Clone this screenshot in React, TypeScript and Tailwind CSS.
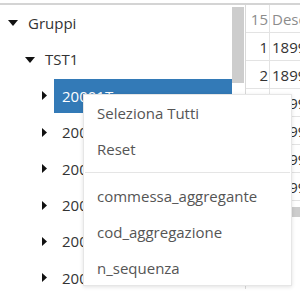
import React from "react"

const font = { fontFamily: '"Open Sans", "Noto Sans", sans-serif' }

const children = ["20001T", "20002T", "20003T", "20004T", "20005T", "20006T"]

function DownTri({ className }: { className: string }) {
  return (
    <svg width="10" height="6" viewBox="0 0 10 6" className={className}>
      <path d="M0 0 L10 0 L5 6 Z" fill="#111" />
    </svg>
  )
}

function RightTri() {
  return (
    <svg width="5" height="9" viewBox="0 0 5 9" className="ml-[42px] shrink-0">
      <path d="M0 0 L5 4.5 L0 9 Z" fill="#111" />
    </svg>
  )
}

export default function App() {
  return (
    <div className="relative w-[300px] h-[291px] overflow-hidden bg-white text-[14px]" style={font}>
      <div className="mt-[3px] border-t-2 border-[#d4d4d4] flex h-[286px]">
        {/* tree panel */}
        <div className="w-[232px] shrink-0 overflow-hidden">
          <div className="h-[36.4px] flex items-center text-[#333]">
            <DownTri className="ml-[8px] shrink-0" />
            <span className="ml-[10px] text-[15px]">Gruppi</span>
          </div>
          <div className="h-[36.4px] flex items-center text-[#333]">
            <DownTri className="ml-[25px] shrink-0" />
            <span className="ml-[10px] text-[15px]">TST1</span>
          </div>
          {children.map((c, i) => (
            <div key={c} className="h-[36.4px] flex items-center">
              <RightTri />
              <div
                className={`ml-[7px] flex-1 h-[34px] flex items-center pl-[8px] text-[15px] ${
                  i === 0 ? "bg-[#337ab7] text-white" : "text-[#333]"
                }`}
              >
                {c}
              </div>
            </div>
          ))}
        </div>
        {/* vertical scrollbar */}
        <div className="w-[12px] shrink-0 pt-[2px]">
          <div className="h-[76px] bg-[#cdcdcd]" />
        </div>
        <div className="w-[1px]" />
        {/* grid */}
        <div className="flex-1 border-l border-[#d9d9d9] overflow-hidden">
          <div className="flex h-[28px] border-b border-[#e3e3e3] text-[#8c8c8c] text-[15px]">
            <div className="w-[24px] shrink-0 border-r border-[#e3e3e3] text-right pr-[1px] leading-[28px]">15</div>
            <div className="pl-[2px] leading-[28px] whitespace-nowrap">Descrizione</div>
          </div>
          {[1, 2, 3, 4, 5, 6].map((n) => (
            <div key={n} className="flex h-[28px] border-b border-[#e3e3e3] text-[#333] text-[15px]">
              <div className="w-[24px] shrink-0 border-r border-[#e3e3e3] text-right pr-[1px] leading-[28px]">{n}</div>
              <div className="pl-[2px] leading-[28px] whitespace-nowrap">1899</div>
            </div>
          ))}
          <div className="h-[10px] bg-[#cdcdcd] ml-[40px] mt-[6px]" />
        </div>
      </div>

      {/* context menu */}
      <div className="absolute left-[83px] top-[94px] w-[209px] h-[192px] bg-white border border-[#e6e6e6] shadow-[0_1px_4px_rgba(0,0,0,0.12)] text-[#555] text-[15px]">
        <div className="h-[36px] flex items-center pl-[13px]">Seleziona Tutti</div>
        <div className="h-[36px] flex items-center pl-[13px]">Reset</div>
        <div className="my-[5px] mx-[1px] border-t border-[#e5e5e5]" />
        <div className="h-[36px] flex items-center pl-[13px]">commessa_aggregante</div>
        <div className="h-[36px] flex items-center pl-[13px]">cod_aggregazione</div>
        <div className="h-[36px] flex items-center pl-[13px]">n_sequenza</div>
      </div>
    </div>
  )
}
